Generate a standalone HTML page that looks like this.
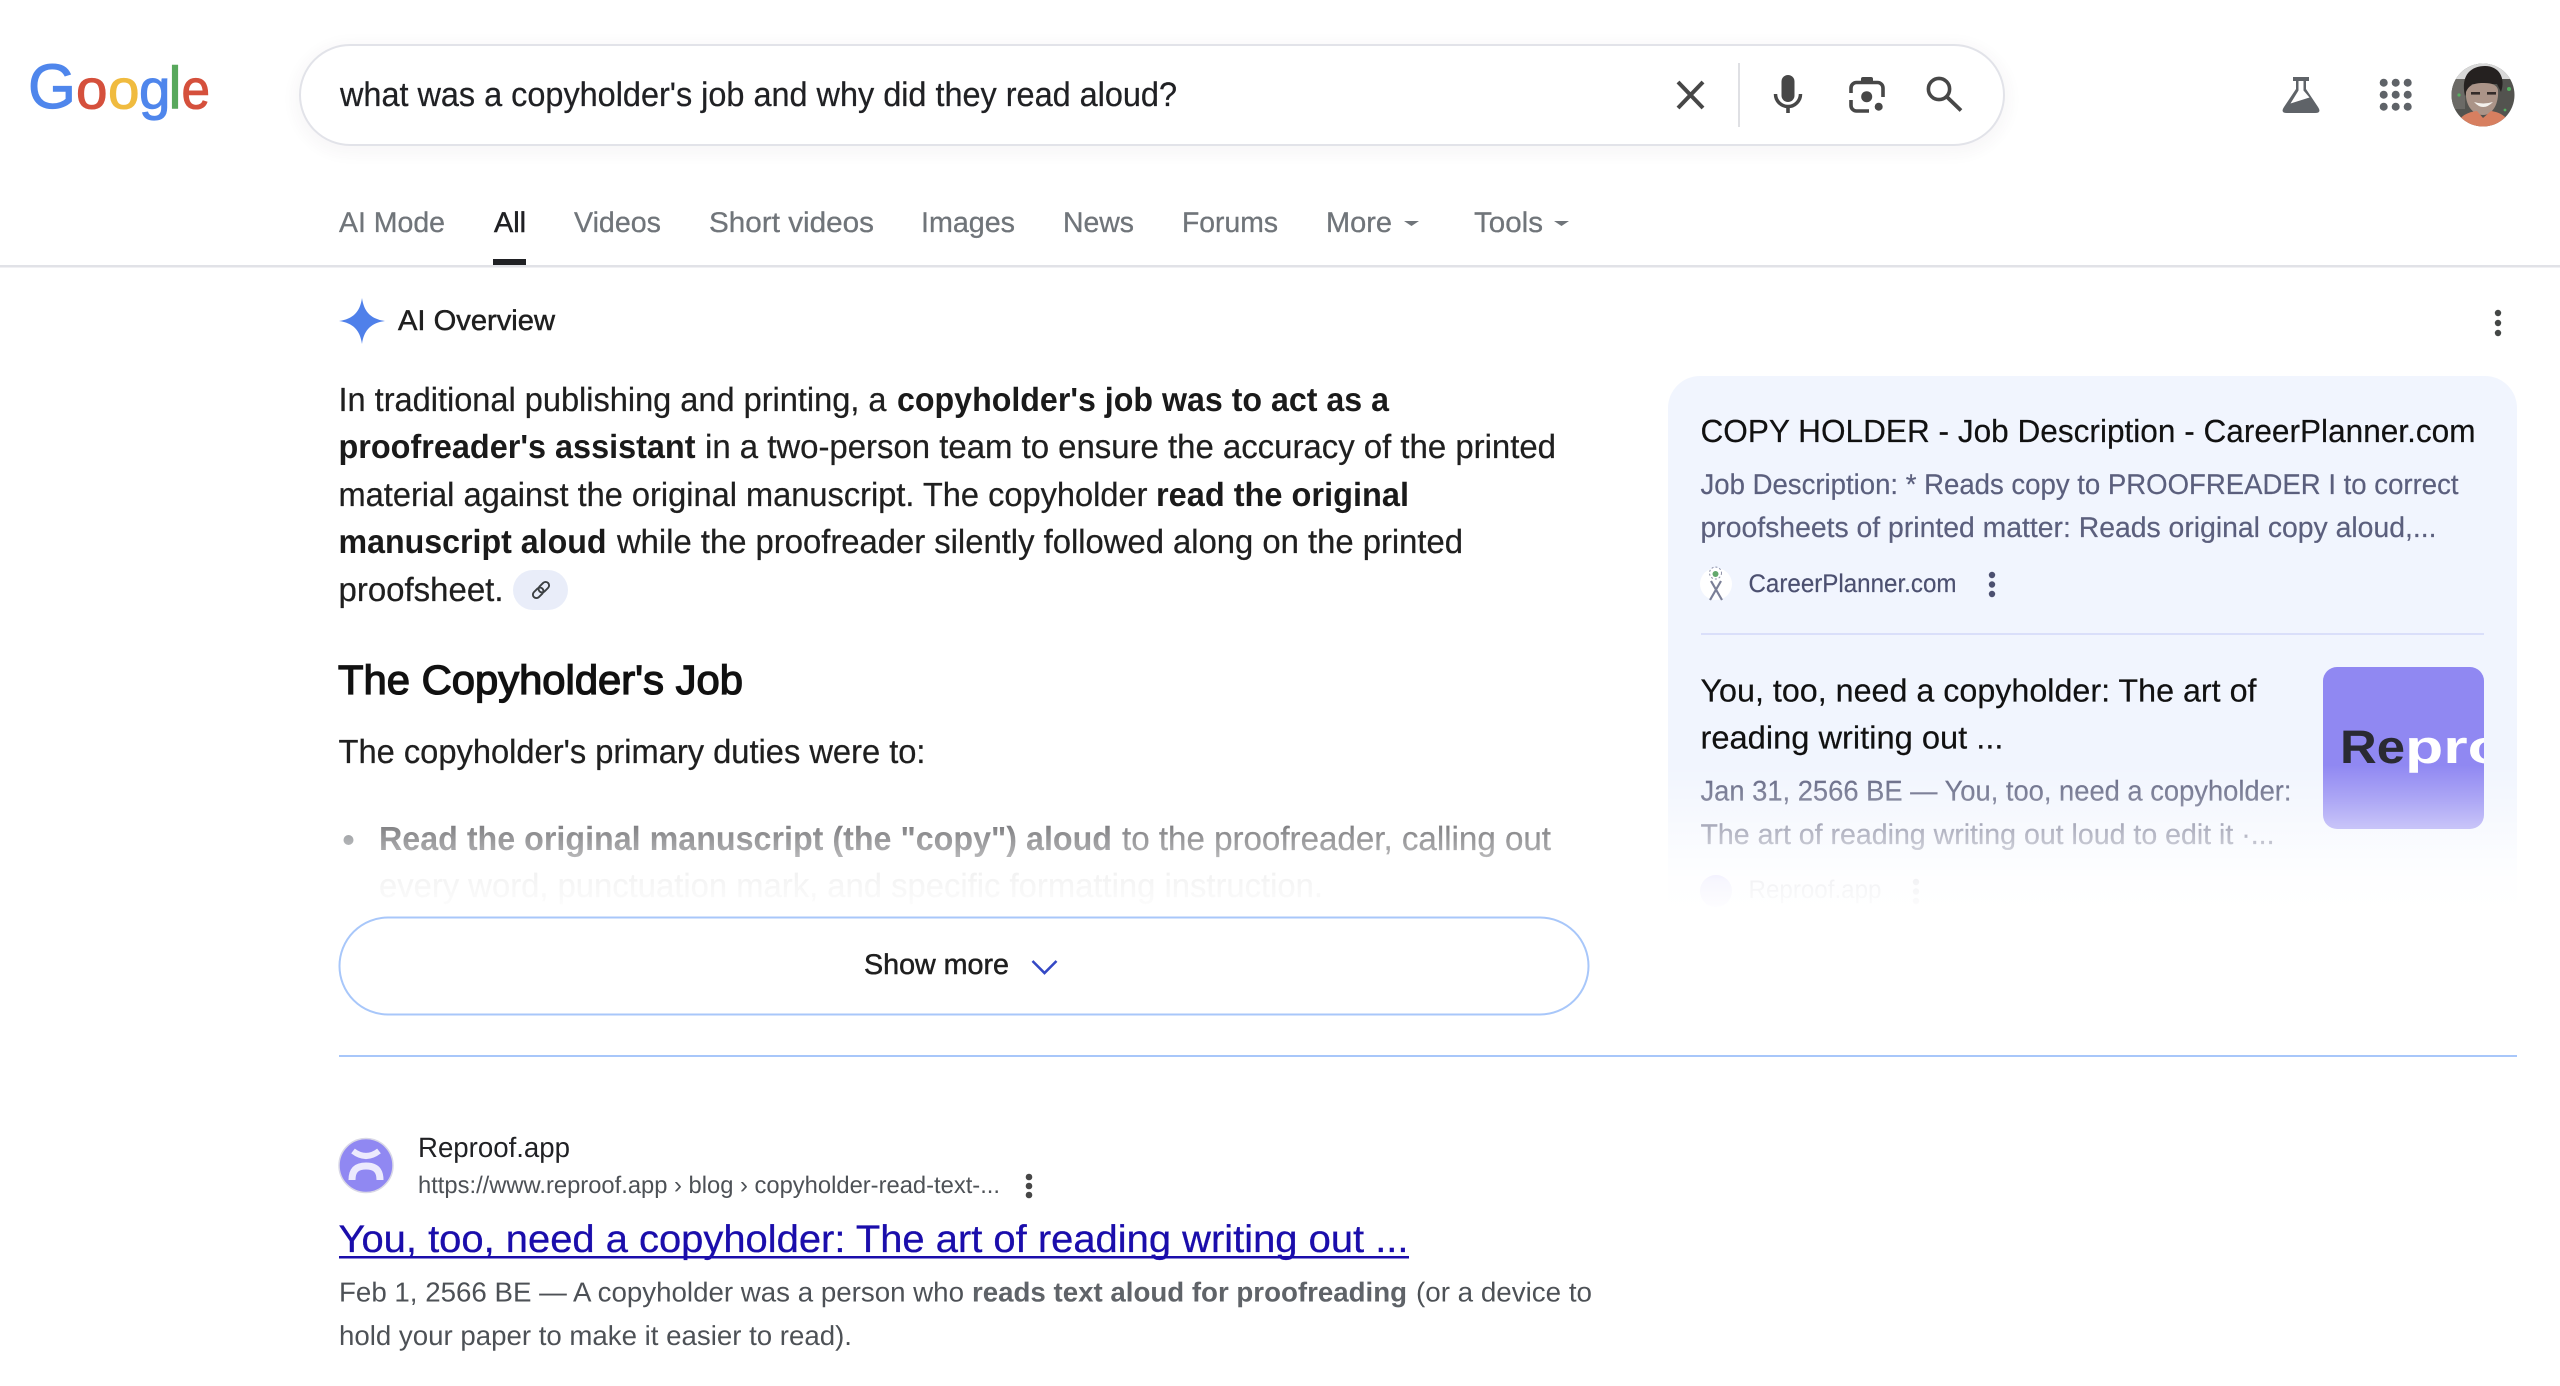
<!DOCTYPE html>
<html lang="en">
<head>
<meta charset="utf-8">
<title>what was a copyholder's job and why did they read aloud? - Google Search</title>
<style>
html,body{margin:0;padding:0;background:#fff;width:2560px;height:1386px;overflow:hidden}
#wrap{position:relative;width:2560px;height:1386px;overflow:hidden;background:#fff}
#box{position:absolute;left:299px;top:44px;width:1702px;height:98px;border:2px solid #e2e3e9;border-radius:52px;background:#fff;box-shadow:0 4px 14px 5px rgba(64,60,67,.04)}
svg{position:absolute;left:0;top:0;display:block}
text{font-family:"Liberation Sans",Arial,sans-serif;text-rendering:geometricPrecision;white-space:pre}
.b{font-size:33.5px;fill:#1f1f1f;stroke:#1f1f1f;stroke-width:.25px}
.bb{font-size:33.5px;fill:#1a1a1a;font-weight:700}
.n{font-size:28.5px;fill:#70757a;stroke:#70757a;stroke-width:.3px}
.ct{font-size:32px;fill:#111;stroke:#111;stroke-width:.2px}
.cd{font-size:28.5px;fill:#5b5f7d;stroke:#5b5f7d;stroke-width:.2px}
.d{font-size:27.5px;fill:#4d5156}
.db{font-size:27.5px;fill:#5f6368;font-weight:700}
</style>
</head>
<body>
<div id="wrap">
<div id="box"></div>
<svg width="2560" height="1386" viewBox="0 0 2560 1386" xmlns="http://www.w3.org/2000/svg">
<defs>
<linearGradient id="fadeL" gradientUnits="userSpaceOnUse" x1="0" y1="790" x2="0" y2="915">
<stop offset="0" stop-color="#fff" stop-opacity=".1"/>
<stop offset=".28" stop-color="#fff" stop-opacity=".35"/>
<stop offset=".56" stop-color="#fff" stop-opacity=".65"/>
<stop offset=".65" stop-color="#fff" stop-opacity=".94"/>
<stop offset=".85" stop-color="#fff" stop-opacity=".975"/>
<stop offset="1" stop-color="#fff" stop-opacity="1"/>
</linearGradient>
<linearGradient id="fadeR" gradientUnits="userSpaceOnUse" x1="0" y1="765" x2="0" y2="915">
<stop offset="0" stop-color="#fff" stop-opacity="0"/>
<stop offset=".24" stop-color="#fff" stop-opacity=".27"/>
<stop offset=".53" stop-color="#fff" stop-opacity=".65"/>
<stop offset=".77" stop-color="#fff" stop-opacity=".93"/>
<stop offset="1" stop-color="#fff" stop-opacity="1"/>
</linearGradient>
<clipPath id="imgClip"><rect x="2323" y="667" width="161" height="162" rx="14"/></clipPath>
<clipPath id="avClip"><circle cx="2483" cy="95" r="31.5"/></clipPath>
</defs>

<!-- Google logo -->
<text x="28" y="108" font-size="63" fill="#4f86ec" stroke="#4f86ec" stroke-width="1" textLength="48" lengthAdjust="spacingAndGlyphs">G</text>
<text x="76" y="108.5" font-size="56" fill="#d5503c" stroke="#d5503c" stroke-width="1" textLength="31.5" lengthAdjust="spacingAndGlyphs">o</text>
<text x="108" y="108.5" font-size="56" fill="#f0bb3f" stroke="#f0bb3f" stroke-width="1" textLength="31.5" lengthAdjust="spacingAndGlyphs">o</text>
<text x="139" y="108.5" font-size="56" fill="#4f86ec" stroke="#4f86ec" stroke-width="1" textLength="31.5" lengthAdjust="spacingAndGlyphs">g</text>
<text x="168" y="108.5" font-size="60" fill="#58a85c" stroke="#58a85c" stroke-width=".6" textLength="14" lengthAdjust="spacingAndGlyphs">l</text>
<text x="181.5" y="108.5" font-size="56" fill="#d5503c" stroke="#d5503c" stroke-width="1" textLength="28.5" lengthAdjust="spacingAndGlyphs">e</text>

<!-- Search text -->
<text x="340" y="106" font-size="34" fill="#202124" stroke="#202124" stroke-width=".25" textLength="837" lengthAdjust="spacingAndGlyphs">what was a copyholder's job and why did they read aloud?</text>

<!-- Search icons -->
<path d="M1678 82L1703 108M1703 82L1678 108" stroke="#474747" stroke-width="4" fill="none"/>
<rect x="1738" y="63" width="2" height="64" fill="#dfe0e4"/>
<rect x="1781.5" y="75" width="13" height="27" rx="6.5" fill="#474747"/>
<path d="M1775.5 94a12.5 12.5 0 0 0 25 0" stroke="#474747" stroke-width="3.5" fill="none"/>
<rect x="1786.2" y="105" width="3.6" height="8" fill="#474747"/>
<path d="M1851 93V88a5.5 5.5 0 0 1 5.5-5.5H1877.5a5.5 5.5 0 0 1 5.5 5.5V97M1851 100V105.5a5.5 5.5 0 0 0 5.5 5.5H1869" stroke="#474747" stroke-width="3.6" fill="none"/>
<rect x="1861" y="77" width="12" height="6" rx="2" fill="#474747"/>
<circle cx="1866.7" cy="96.7" r="5.5" fill="#474747"/>
<circle cx="1878.7" cy="106.7" r="4" fill="#474747"/>
<circle cx="1939" cy="89" r="10.6" stroke="#474747" stroke-width="3.6" fill="none"/>
<path d="M1947 97L1961 110.5" stroke="#474747" stroke-width="3.8" fill="none"/>

<!-- Flask -->
<path d="M2293 77H2309V81H2306V89L2318 107Q2322 113 2315 113H2287Q2280 113 2284 107L2296 89V81H2293Z" fill="#5f6368"/>
<path d="M2298.5 81H2303.5V90.5L2309.5 97.5L2290.5 103.5L2298.5 90.5Z" fill="#fff"/>

<!-- Apps -->
<g fill="#5f6368">
<circle cx="2383.7" cy="82.7" r="4"/><circle cx="2395.7" cy="82.7" r="4"/><circle cx="2407.7" cy="82.7" r="4"/>
<circle cx="2383.7" cy="94.7" r="4"/><circle cx="2395.7" cy="94.7" r="4"/><circle cx="2407.7" cy="94.7" r="4"/>
<circle cx="2383.7" cy="106.7" r="4"/><circle cx="2395.7" cy="106.7" r="4"/><circle cx="2407.7" cy="106.7" r="4"/>
</g>

<!-- Avatar -->
<g clip-path="url(#avClip)">
<rect x="2450" y="62" width="66" height="66" fill="#53534f"/>
<rect x="2450" y="62" width="66" height="17" fill="#d8d8d8"/>
<rect x="2450" y="79" width="15" height="30" fill="#6b6a66"/>
<circle cx="2459" cy="95" r="1.6" fill="#55b060"/><circle cx="2509" cy="89" r="2" fill="#55b060"/><circle cx="2505" cy="110" r="1.4" fill="#55b060"/>
<path d="M2465 96C2460 74 2472 66 2485 66C2499 66 2506 78 2501 92L2497 84H2472Z" fill="#252120"/>
<path d="M2466 92C2469 84 2476 83 2484 83C2492 83 2497 85 2498 90C2499 103 2493 115 2483 115C2472 115 2465 104 2466 92Z" fill="#ab9488"/>
<rect x="2471" y="92" width="9" height="2.6" fill="#332b29"/><rect x="2487" y="92" width="9" height="2.6" fill="#332b29"/>
<path d="M2474 102Q2483 112 2493 102Q2483 105 2474 102Z" fill="#f4f1ed"/>
<path d="M2456 128C2458 116 2468 112 2477 111L2483 118L2491 111C2500 112 2510 118 2512 128Z" fill="#d77f60"/>
</g>

<!-- Nav -->
<text class="n" x="339" y="232" textLength="106" lengthAdjust="spacingAndGlyphs">AI Mode</text>
<text class="n" x="494" y="232" style="fill:#202124;stroke:#202124;stroke-width:.5px" textLength="32" lengthAdjust="spacingAndGlyphs">All</text>
<text class="n" x="574" y="232" textLength="87" lengthAdjust="spacingAndGlyphs">Videos</text>
<text class="n" x="709" y="232" textLength="165" lengthAdjust="spacingAndGlyphs">Short videos</text>
<text class="n" x="921" y="232" textLength="94" lengthAdjust="spacingAndGlyphs">Images</text>
<text class="n" x="1063" y="232" textLength="71" lengthAdjust="spacingAndGlyphs">News</text>
<text class="n" x="1182" y="232" textLength="96" lengthAdjust="spacingAndGlyphs">Forums</text>
<text class="n" x="1326" y="232" textLength="66" lengthAdjust="spacingAndGlyphs">More</text>
<path d="M1404 221H1419L1411.5 226Z" fill="#70757a"/>
<text class="n" x="1474" y="232" textLength="69" lengthAdjust="spacingAndGlyphs">Tools</text>
<path d="M1554 221H1569L1561.5 226Z" fill="#70757a"/>
<rect x="493" y="259" width="33" height="6" fill="#202124"/>
<rect x="0" y="265" width="2560" height="2.5" fill="#e1e2e7"/>

<!-- AI overview header -->
<path d="M362 298C364 312 371 319 385 321C371 323 364 330 362 344C360 330 353 323 339 321C353 319 360 312 362 298Z" fill="#4f80ea"/>
<text x="398" y="330" font-size="28.5" fill="#1f1f1f" stroke="#1f1f1f" stroke-width=".5" textLength="157" lengthAdjust="spacingAndGlyphs">AI Overview</text>
<g fill="#444746"><circle cx="2498" cy="313" r="3.2"/><circle cx="2498" cy="323" r="3.2"/><circle cx="2498" cy="333" r="3.2"/></g>

<!-- Paragraph -->
<text class="b" x="338.5" y="411" textLength="548" lengthAdjust="spacingAndGlyphs">In traditional publishing and printing, a</text>
<text class="bb" x="897" y="411" textLength="492" lengthAdjust="spacingAndGlyphs">copyholder's job was to act as a</text>
<text class="bb" x="338.5" y="458" textLength="357" lengthAdjust="spacingAndGlyphs">proofreader's assistant</text>
<text class="b" x="705" y="458" textLength="851" lengthAdjust="spacingAndGlyphs">in a two-person team to ensure the accuracy of the printed</text>
<text class="b" x="338.5" y="506" textLength="809" lengthAdjust="spacingAndGlyphs">material against the original manuscript. The copyholder</text>
<text class="bb" x="1156" y="506" textLength="253" lengthAdjust="spacingAndGlyphs">read the original</text>
<text class="bb" x="338.5" y="553" textLength="268" lengthAdjust="spacingAndGlyphs">manuscript aloud</text>
<text class="b" x="617" y="553" textLength="846" lengthAdjust="spacingAndGlyphs">while the proofreader silently followed along on the printed</text>
<text class="b" x="338.5" y="601" textLength="165" lengthAdjust="spacingAndGlyphs">proofsheet.</text>
<rect x="513" y="570" width="55" height="40" rx="20" fill="#e9edf9"/>
<g transform="translate(541 590) rotate(-45)" fill="none" stroke="#3c4043" stroke-width="1.9">
<rect x="-10" y="-3.5" width="12" height="7" rx="3.5"/><rect x="-2" y="-3.5" width="12" height="7" rx="3.5"/>
</g>

<!-- Heading -->
<text x="338" y="694" font-size="41" fill="#111" stroke="#111" stroke-width="1.3" textLength="405" lengthAdjust="spacingAndGlyphs">The Copyholder's Job</text>
<text class="b" x="338.5" y="763" textLength="587" lengthAdjust="spacingAndGlyphs">The copyholder's primary duties were to:</text>

<!-- Bullet -->
<circle cx="348.5" cy="840" r="5" fill="#5f6368"/>
<text class="bb" x="379" y="850" textLength="733" lengthAdjust="spacingAndGlyphs" style="fill:#3c3c40">Read the original manuscript (the "copy") aloud</text>
<text class="b" x="1122" y="850" textLength="429" lengthAdjust="spacingAndGlyphs" style="fill:#3c3c40;stroke:#3c3c40">to the proofreader, calling out</text>
<text class="b" x="379" y="897" textLength="944" lengthAdjust="spacingAndGlyphs">every word, punctuation mark, and specific formatting instruction.</text>
<rect x="330" y="790" width="1270" height="125" fill="url(#fadeL)"/>

<!-- Show more -->
<rect x="339.5" y="917.5" width="1249" height="97" rx="48.5" fill="#fff" stroke="#a8c7fa" stroke-width="2"/>
<text x="864" y="974" font-size="28.5" fill="#1f1f1f" stroke="#1f1f1f" stroke-width=".5" textLength="145" lengthAdjust="spacingAndGlyphs">Show more</text>
<path d="M1032.5 961L1044.5 973L1056.5 961" fill="none" stroke="#3448c5" stroke-width="2.6"/>
<rect x="339" y="1055" width="2178" height="2" fill="#a8c7fa"/>

<!-- Right card -->
<path d="M1668 408a32 32 0 0 1 32-32H2485a32 32 0 0 1 32 32V915H1668Z" fill="#f1f5fe"/>
<text class="ct" x="1700.5" y="442" textLength="775" lengthAdjust="spacingAndGlyphs">COPY HOLDER - Job Description - CareerPlanner.com</text>
<text class="cd" x="1700.5" y="494" textLength="758" lengthAdjust="spacingAndGlyphs">Job Description: * Reads copy to PROOFREADER I to correct</text>
<text class="cd" x="1700.5" y="537" textLength="736" lengthAdjust="spacingAndGlyphs">proofsheets of printed matter: Reads original copy aloud,...</text>
<circle cx="1716" cy="584" r="16" fill="#fff"/>
<path d="M1710 600L1721 581M1722 600L1711 581" stroke="#7b7f96" stroke-width="2.2" fill="none"/>
<circle cx="1715.5" cy="574" r="3" fill="#63a86c"/>
<circle cx="1715.5" cy="573" r="6" fill="none" stroke="#8d90a6" stroke-width="1" stroke-dasharray="2 2"/>
<text x="1748.5" y="592" font-size="25.5" fill="#4c5070" stroke="#4c5070" stroke-width=".2" textLength="208" lengthAdjust="spacingAndGlyphs">CareerPlanner.com</text>
<g fill="#4c5070"><circle cx="1992" cy="575" r="3.2"/><circle cx="1992" cy="584.5" r="3.2"/><circle cx="1992" cy="594" r="3.2"/></g>
<rect x="1701" y="633" width="783" height="2" fill="#dadffa"/>

<text class="ct" x="1700.5" y="701.5" textLength="556" lengthAdjust="spacingAndGlyphs">You, too, need a copyholder: The art of</text>
<text class="ct" x="1700.5" y="748.5" textLength="303" lengthAdjust="spacingAndGlyphs">reading writing out ...</text>
<text class="cd" x="1700.5" y="800.5" textLength="591" lengthAdjust="spacingAndGlyphs">Jan 31, 2566 BE — You, too, need a copyholder:</text>
<text class="cd" x="1700.5" y="844" textLength="574" lengthAdjust="spacingAndGlyphs">The art of reading writing out loud to edit it ·...</text>
<g clip-path="url(#imgClip)">
<rect x="2323" y="667" width="161" height="162" fill="#9088f2"/>
<text x="2340" y="763" font-size="47" font-weight="700" fill="#2a2a33" textLength="65" lengthAdjust="spacingAndGlyphs">Re</text>
<text x="2405" y="763" font-size="47" font-weight="700" fill="#fff" textLength="160" lengthAdjust="spacingAndGlyphs">proof</text>
</g>
<circle cx="1716" cy="891" r="16" fill="#9088f2"/>
<text x="1748.5" y="898" font-size="25.5" fill="#4c5070" textLength="133" lengthAdjust="spacingAndGlyphs">Reproof.app</text>
<g fill="#4c5070"><circle cx="1916" cy="882" r="3.2"/><circle cx="1916" cy="891.5" r="3.2"/><circle cx="1916" cy="901" r="3.2"/></g>
<rect x="1660" y="765" width="870" height="151" fill="url(#fadeR)"/>

<!-- Result -->
<circle cx="366" cy="1165.5" r="27" fill="#9088f2" stroke="#d9d8e6" stroke-width="1.5"/>
<path d="M352 1180C352 1169 358 1166 366 1166C374 1166 380 1169 380 1180" fill="none" stroke="#eceafd" stroke-width="7"/>
<path d="M353 1151Q366 1161 379 1151" fill="none" stroke="#eceafd" stroke-width="6"/>
<text x="418" y="1157" font-size="28" fill="#202124" textLength="152" lengthAdjust="spacingAndGlyphs">Reproof.app</text>
<text x="418" y="1193" font-size="24" fill="#4d5156" textLength="582" lengthAdjust="spacingAndGlyphs">https://www.reproof.app › blog › copyholder-read-text-...</text>
<g fill="#474747"><circle cx="1029" cy="1177" r="3.3"/><circle cx="1029" cy="1186" r="3.3"/><circle cx="1029" cy="1195" r="3.3"/></g>
<text x="338.5" y="1252" font-size="38.5" fill="#1a0dab" stroke="#1a0dab" stroke-width=".3" textLength="1070" lengthAdjust="spacingAndGlyphs">You, too, need a copyholder: The art of reading writing out ...</text>
<rect x="339" y="1256" width="1070" height="2.5" fill="#1a0dab"/>
<text class="d" x="339" y="1301.5" textLength="625" lengthAdjust="spacingAndGlyphs">Feb 1, 2566 BE — A copyholder was a person who</text>
<text class="db" x="972" y="1301.5" textLength="435" lengthAdjust="spacingAndGlyphs">reads text aloud for proofreading</text>
<text class="d" x="1416" y="1301.5" textLength="176" lengthAdjust="spacingAndGlyphs">(or a device to</text>
<text class="d" x="339" y="1345" textLength="513" lengthAdjust="spacingAndGlyphs">hold your paper to make it easier to read).</text>
</svg>
</div>
</body>
</html>
